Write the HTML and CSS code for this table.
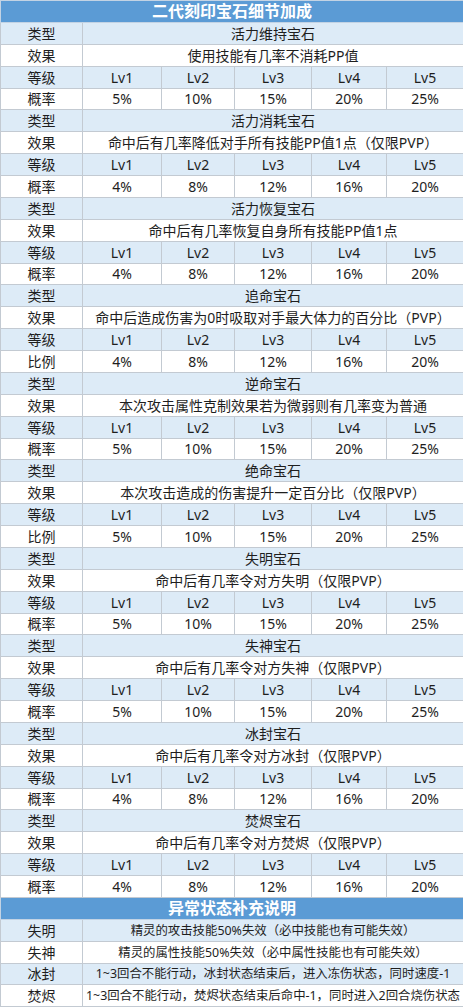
FILE: index.html
```html
<!DOCTYPE html>
<html lang="zh-CN">
<head>
<meta charset="utf-8">
<title>二代刻印宝石细节加成</title>
<link rel="stylesheet" href="styles.css">
</head>
<body>
<table class="sheet">
  <colgroup>
    <col class="c0"><col class="c1"><col class="c2"><col class="c3"><col class="c4"><col class="c5">
  </colgroup>
  <tbody>
    <tr class="head"><td colspan="6">二代刻印宝石细节加成</td></tr>

    <tr class="lt"><td>类型</td><td colspan="5">活力维持宝石</td></tr>
    <tr class="wt"><td>效果</td><td colspan="5">使用技能有几率不消耗PP值</td></tr>
    <tr class="lt"><td>等级</td><td>Lv1</td><td>Lv2</td><td>Lv3</td><td>Lv4</td><td>Lv5</td></tr>
    <tr class="wt"><td>概率</td><td>5%</td><td>10%</td><td>15%</td><td>20%</td><td>25%</td></tr>

    <tr class="lt"><td>类型</td><td colspan="5">活力消耗宝石</td></tr>
    <tr class="wt"><td>效果</td><td colspan="5">命中后有几率降低对手所有技能PP值1点（仅限PVP）</td></tr>
    <tr class="lt"><td>等级</td><td>Lv1</td><td>Lv2</td><td>Lv3</td><td>Lv4</td><td>Lv5</td></tr>
    <tr class="wt"><td>概率</td><td>4%</td><td>8%</td><td>12%</td><td>16%</td><td>20%</td></tr>

    <tr class="lt"><td>类型</td><td colspan="5">活力恢复宝石</td></tr>
    <tr class="wt"><td>效果</td><td colspan="5">命中后有几率恢复自身所有技能PP值1点</td></tr>
    <tr class="lt"><td>等级</td><td>Lv1</td><td>Lv2</td><td>Lv3</td><td>Lv4</td><td>Lv5</td></tr>
    <tr class="wt"><td>概率</td><td>4%</td><td>8%</td><td>12%</td><td>16%</td><td>20%</td></tr>

    <tr class="lt"><td>类型</td><td colspan="5">追命宝石</td></tr>
    <tr class="wt"><td>效果</td><td colspan="5">命中后造成伤害为0时吸取对手最大体力的百分比（PVP）</td></tr>
    <tr class="lt"><td>等级</td><td>Lv1</td><td>Lv2</td><td>Lv3</td><td>Lv4</td><td>Lv5</td></tr>
    <tr class="wt"><td>比例</td><td>4%</td><td>8%</td><td>12%</td><td>16%</td><td>20%</td></tr>

    <tr class="lt"><td>类型</td><td colspan="5">逆命宝石</td></tr>
    <tr class="wt"><td>效果</td><td colspan="5">本次攻击属性克制效果若为微弱则有几率变为普通</td></tr>
    <tr class="lt"><td>等级</td><td>Lv1</td><td>Lv2</td><td>Lv3</td><td>Lv4</td><td>Lv5</td></tr>
    <tr class="wt"><td>概率</td><td>5%</td><td>10%</td><td>15%</td><td>20%</td><td>25%</td></tr>

    <tr class="lt"><td>类型</td><td colspan="5">绝命宝石</td></tr>
    <tr class="wt"><td>效果</td><td colspan="5">本次攻击造成的伤害提升一定百分比（仅限PVP）</td></tr>
    <tr class="lt"><td>等级</td><td>Lv1</td><td>Lv2</td><td>Lv3</td><td>Lv4</td><td>Lv5</td></tr>
    <tr class="wt"><td>比例</td><td>5%</td><td>10%</td><td>15%</td><td>20%</td><td>25%</td></tr>

    <tr class="lt"><td>类型</td><td colspan="5">失明宝石</td></tr>
    <tr class="wt"><td>效果</td><td colspan="5">命中后有几率令对方失明（仅限PVP）</td></tr>
    <tr class="lt"><td>等级</td><td>Lv1</td><td>Lv2</td><td>Lv3</td><td>Lv4</td><td>Lv5</td></tr>
    <tr class="wt"><td>概率</td><td>5%</td><td>10%</td><td>15%</td><td>20%</td><td>25%</td></tr>

    <tr class="lt"><td>类型</td><td colspan="5">失神宝石</td></tr>
    <tr class="wt"><td>效果</td><td colspan="5">命中后有几率令对方失神（仅限PVP）</td></tr>
    <tr class="lt"><td>等级</td><td>Lv1</td><td>Lv2</td><td>Lv3</td><td>Lv4</td><td>Lv5</td></tr>
    <tr class="wt"><td>概率</td><td>5%</td><td>10%</td><td>15%</td><td>20%</td><td>25%</td></tr>

    <tr class="lt"><td>类型</td><td colspan="5">冰封宝石</td></tr>
    <tr class="wt"><td>效果</td><td colspan="5">命中后有几率令对方冰封（仅限PVP）</td></tr>
    <tr class="lt"><td>等级</td><td>Lv1</td><td>Lv2</td><td>Lv3</td><td>Lv4</td><td>Lv5</td></tr>
    <tr class="wt"><td>概率</td><td>4%</td><td>8%</td><td>12%</td><td>16%</td><td>20%</td></tr>

    <tr class="lt"><td>类型</td><td colspan="5">焚烬宝石</td></tr>
    <tr class="wt"><td>效果</td><td colspan="5">命中后有几率令对方焚烬（仅限PVP）</td></tr>
    <tr class="lt"><td>等级</td><td>Lv1</td><td>Lv2</td><td>Lv3</td><td>Lv4</td><td>Lv5</td></tr>
    <tr class="wt"><td>概率</td><td>4%</td><td>8%</td><td>12%</td><td>16%</td><td>20%</td></tr>

    <tr class="head"><td colspan="6">异常状态补充说明</td></tr>
    <tr class="lt note"><td>失明</td><td colspan="5">精灵的攻击技能50%失效（必中技能也有可能失效）</td></tr>
    <tr class="wt note"><td>失神</td><td colspan="5">精灵的属性技能50%失效（必中属性技能也有可能失效）</td></tr>
    <tr class="lt note"><td>冰封</td><td colspan="5">1~3回合不能行动，冰封状态结束后，进入冻伤状态，同时速度-1</td></tr>
    <tr class="wt note"><td>焚烬</td><td colspan="5">1~3回合不能行动，焚烬状态结束后命中-1，同时进入2回合烧伤状态</td></tr>
  </tbody>
</table>
</body>
</html>
```

FILE: styles.css
```css
html, body {
  margin: 0;
  padding: 0;
  background: #ffffff;
}

.sheet {
  width: 463px;
  border-collapse: collapse;
  table-layout: fixed;
  font-family: "Noto Sans", "Noto Sans CJK SC", sans-serif;
  font-size: 14px;
  color: #1e1e1e;
}

.c0 { width: 82px; }
.c1 { width: 79px; }
.c2 { width: 73px; }
.c3 { width: 77px; }
.c4 { width: 75px; }
.c5 { width: 77px; }

.sheet tr {
  height: 21.89px;
}

.sheet td {
  padding: 0;
  border: 1px solid #c3cad2;
  text-align: center;
  vertical-align: middle;
  line-height: 19px;
  white-space: nowrap;
  overflow: hidden;
}

.head td {
  background: #5b9bd5;
  color: #ffffff;
  font-weight: 700;
  font-size: 16px;
  border-color: #c3d3e4;
}

.lt td {
  background: #ddebf7;
}

.wt td {
  background: #ffffff;
}

.note td + td {
  font-size: 12.4px;
}
```
